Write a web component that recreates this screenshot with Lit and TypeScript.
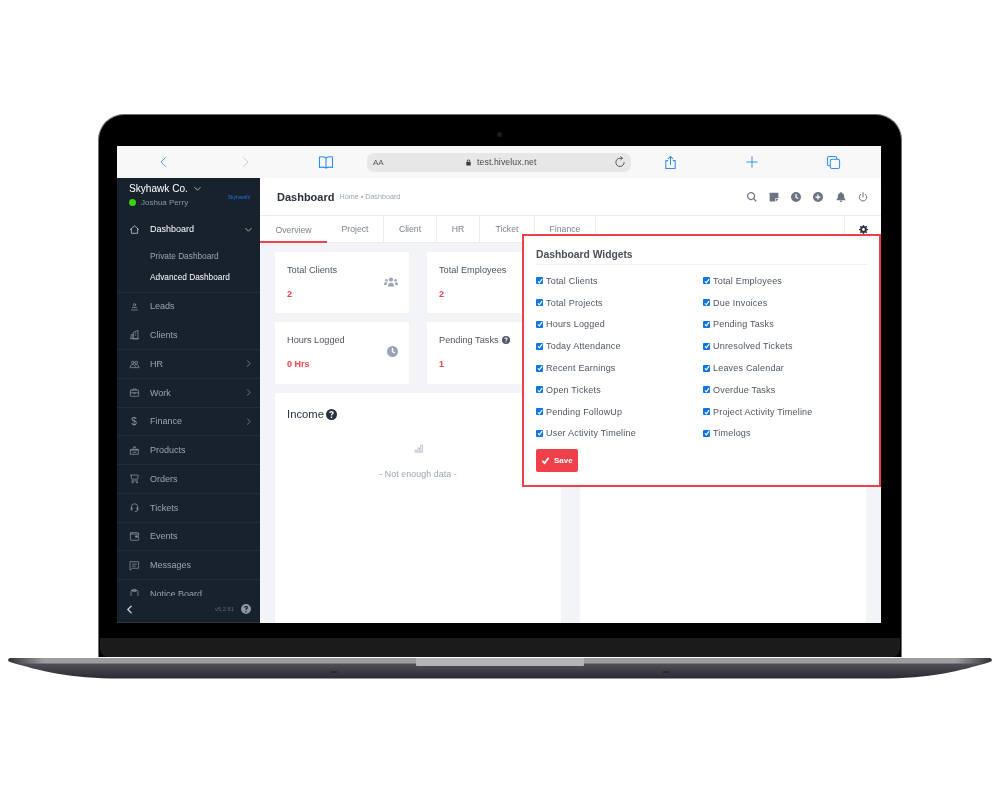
import { LitElement, html, css, svg } from "lit";
import { customElement } from "lit/decorators.js";

const stroke = (d: unknown, size = 11, vb = 16) => html`<svg class="ic" width=${size} height=${size} viewBox="0 0 ${vb} ${vb}" fill="none" stroke="currentColor" stroke-width="1.1" stroke-linecap="round" stroke-linejoin="round">${d}</svg>`;
const solid = (d: unknown, size = 11, vb = 16) => html`<svg class="ic" width=${size} height=${size} viewBox="0 0 ${vb} ${vb}" fill="currentColor">${d}</svg>`;

const helpIcon = (size: number) => solid(svg`<path fill-rule="evenodd" d="M8 0a8 8 0 1 0 0 16A8 8 0 0 0 8 0ZM7 11h2v2H7v-2Zm1-8c1.900 0 3.200 1.100 3.200 2.700 0 1.200-.7 1.800-1.400 2.300-.6.400-.8.600-.8 1.200v.3H7v-.5c0-1.100.5-1.600 1.100-2.100.6-.4 1-.7 1-1.200 0-.6-.5-1-1.200-1-.8 0-1.300.5-1.400 1.200L4.600 5.700C4.800 4 6.100 3 8 3Z"/>`, size);

const navIcons: Record<string, unknown> = {
  Dashboard: svg`<path d="M2 8 8 2.500 14 8M3.500 7v6.500h9V7"/>`,
  Leads: svg`<circle cx="8" cy="5.500" r="1.700"/><path d="M5 9.500h6M3.500 13h9"/>`,
  Clients: svg`<path d="M3 14V9l3-1.500V14M6 14V5l7-3v12zM2 14h12M9 6h1M9 9h1"/>`,
  HR: svg`<circle cx="5.500" cy="6.500" r="2"/><circle cx="10.500" cy="6.500" r="2"/><path d="M2 12.500c0-2 1.500-3 3.500-3s3.500 1 3.500 3M9.500 9.500c2.500 0 4.500 1 4.500 3M1.500 14h13"/>`,
  Work: svg`<rect x="2" y="4.500" width="12" height="9" rx="1"/><path d="M5.500 4.500V3h5v1.500M2 8.500h12M7 8.500v1h2v-1"/>`,
  Products: svg`<path d="M2.500 7h11v6.500h-11zM2 7h12M5 7l2-4M11 7 9 3M7 3h2M6 10.500h4"/>`,
  Orders: svg`<path d="M2.500 3h11l-1 6H4L3 3M4 11.500h8.500"/><circle cx="5" cy="13.500" r=".8"/><circle cx="11.500" cy="13.500" r=".8"/>`,
  Tickets: svg`<path d="M3.500 10V7a4.500 4.500 0 0 1 9 0v3"/><rect x="3" y="8" width="1.500" height="4" rx=".7"/><rect x="11.500" y="8" width="1.500" height="4" rx=".7"/><path d="M12.500 12c0 1.500-1.500 2-3.500 2"/>`,
  Events: svg`<rect x="2" y="2.500" width="12" height="11" rx="1"/><path d="M2 4.500h12"/><rect x="10" y="7" width="2" height="2" fill="currentColor"/>`,
  Messages: svg`<path d="M2 2.500h12v9.500H5l-3 2.500zM5 6h6M5 9h4"/>`,
  "Notice Board": svg`<rect x="3" y="3.500" width="10" height="11" rx="1"/><rect x="6" y="2" width="4" height="3"/>`,
};

const nav: { label: string; chevron?: boolean; top?: boolean }[] = [
  { label: "Leads", top: true },
  { label: "Clients" },
  { label: "HR", chevron: true, top: true },
  { label: "Work", chevron: true, top: true },
  { label: "Finance", chevron: true, top: true },
  { label: "Products", top: true },
  { label: "Orders", top: true },
  { label: "Tickets", top: true },
  { label: "Events", top: true },
  { label: "Messages", top: true },
  { label: "Notice Board", top: true },
];

const widgets = [
  ["Total Clients", "Total Employees"],
  ["Total Projects", "Due Invoices"],
  ["Hours Logged", "Pending Tasks"],
  ["Today Attendance", "Unresolved Tickets"],
  ["Recent Earnings", "Leaves Calendar"],
  ["Open Tickets", "Overdue Tasks"],
  ["Pending FollowUp", "Project Activity Timeline"],
  ["User Activity Timeline", "Timelogs"],
].flat();

const tabs: [string, number][] = [["Overview", 67], ["Project", 57], ["Client", 53], ["HR", 43], ["Ticket", 55], ["Finance", 61]];

const usersIcon = solid(svg`<circle cx="10" cy="5" r="3"/><circle cx="3.500" cy="6" r="1.800"/><circle cx="16.500" cy="6" r="1.800"/><path d="M5.500 15c0-3 1.500-5.500 4.500-5.500s4.500 2.500 4.500 5.500zM0 12c0-2 1-3 3-3 1 0 1.500.3 2 .8-.8 1-1.200 2-1.300 3.200H0zM20 12c0-2-1-3-3-3-1 0-1.500.3-2 .8.800 1 1.200 2 1.300 3.200H20z"/>`, 14, 20);
const clockIcon = (s: number) => solid(svg`<path fill-rule="evenodd" d="M8 0a8 8 0 1 0 0 16A8 8 0 0 0 8 0Zm-1 3h2v4.600l3 1.800-1 1.600L7 8.700z"/>`, s);

const cards = [
  { title: "Total Clients", value: "2", icon: usersIcon },
  { title: "Total Employees", value: "2", icon: null },
  { title: "Hours Logged", value: "0 Hrs", icon: clockIcon(11) },
  { title: "Pending Tasks", value: "1", icon: null, help: true },
];

@customElement("app-root")
export class AppRoot extends LitElement {
  static styles = css`
    :host {
      display: block;
      width: 1000px;
      height: 788px;
      background: #fff;
      padding-top: 114px;
      box-sizing: border-box;
      font-family: "Liberation Sans", Arial, sans-serif;
      overflow: hidden;
      color: #28313c;
      position: relative;
    }
    .ic { display: block; flex: none; }
    .lid {
      width: 804px;
      height: 543px;
      margin-left: 98px;
      box-sizing: border-box;
      background: #000;
      border: 1px solid #6f7177;
      border-bottom: 0;
      border-radius: 26px 26px 0 0;
      padding: 31px 20px 0 18px;
      display: flex;
      flex-direction: column;
    }
    .camera {
      position: absolute;
      left: 497px;
      top: 132px;
      width: 5px;
      height: 5px;
      border-radius: 50%;
      background: #1d1d20;
    }
    .screen {
      height: 477px;
      flex: none;
      background: #fff;
      display: flex;
      flex-direction: column;
      overflow: hidden;
      position: relative;
      filter: blur(0.25px);
    }
    .chin { flex: 1; background: #1b1b1b; margin: 15px -19px 0 -17px; border-radius: 0 0 8px 8px; }
    .base { display: block; }
    .browser {
      height: 32px;
      flex: none;
      background: #f8f8f8;
      display: grid;
      grid-template-columns: 250px 264px 250px;
      color: #2f8cf5;
    }
    .tools { display: flex; align-items: center; height: 32px; }
    .tools.l { padding-left: 41px; gap: 69px; }
    .tools.r { padding-left: 32px; gap: 67px; }
    .book { margin-left: -2px; }
    .fwd { color: #c4c4c4; }
    .url {
      align-self: center;
      height: 19px;
      background: #e7e7e7;
      border-radius: 7px;
      display: flex;
      align-items: center;
      color: #3a3a3c;
      padding: 0 5px 0 6px;
      gap: 5px;
    }
    .aa { font-size: 8px; color: #555; width: 87px; }
    .host { flex: 1; color: #4a4a4d; font-size: 8.700px; letter-spacing: .1px; }
    .app { flex: 1; display: flex; min-height: 0; }
    .side {
      width: 143px;
      flex: none;
      background: #18222d;
      color: #9aa5b3;
      display: flex;
      flex-direction: column;
      font-size: 9px;
    }
    .brand { height: 38px; flex: none; padding: 4px 0 0 12px; box-sizing: border-box; position: relative; }
    .co { display: flex; align-items: center; gap: 5px; color: #fff; font-size: 10.100px; height: 13px; }
    .user { display: flex; align-items: center; gap: 5px; color: #8b96a5; font-size: 8px; margin-top: 3px; }
    .dot { width: 7px; height: 7px; border-radius: 50%; background: #39d411; }
    .logo { position: absolute; left: 111px; top: 17px; font-size: 4.500px; font-weight: 700; color: #1d5fb8; }
    .nav { flex: 1; overflow: hidden; min-height: 0; }
    .item {
      height: 28.750px;
      box-sizing: border-box;
      display: flex;
      align-items: center;
      padding: 0 7.500px 0 11.500px;
      gap: 10.500px;
    }
    .item.top { border-top: 1px solid #222d39; }
    .item .ic:first-child { color: #8a94a3; }
    .item .lbl { flex: 1; }
    .item.active { color: #fff; height: 26px; }
    .item.active .ic:first-child { color: #c9d1dc; }
    .sub { height: 21px; display: flex; align-items: center; padding-left: 33px; font-size: 8.300px; }
    .sub.on { color: #fff; }
    .subs { padding: 3px 0 4.600px; }
    .dollar { width: 11px; text-align: center; font-size: 10px; color: #8a94a3; }
    .foot {
      height: 27px;
      flex: none;
      background: #18222d;
      display: flex;
      align-items: center;
      padding: 0 9px 0 8px;
      font-size: 5.800px;
      color: #5d6878;
      gap: 5px;
      border-bottom: 1px solid #2b3542;
      box-sizing: border-box;
    }
    .back { color: #c9d1dc; }
    .foot .v { flex: 1; text-align: right; }
    .foot-help { color: #8d96a3; margin-left: 2px; }
    .main { flex: 1; display: flex; flex-direction: column; min-width: 0; background: #f2f4f7; }
    .head {
      height: 38px;
      flex: none;
      background: #fff;
      display: flex;
      align-items: center;
      padding: 0 13px 0 17px;
      border-bottom: 1px solid #ebedf0;
      box-sizing: border-box;
    }
    .head h1 { margin: 0; font-size: 11px; font-weight: 700; color: #28313c; }
    .crumb { font-size: 7.200px; color: #99a5b5; margin-left: 5px; flex: 1; }
    .hicons { display: flex; gap: 12.300px; color: #6a7482; align-items: center; }
    .tabs { height: 27px; flex: none; background: #fff; display: flex; border-bottom: 1px solid #ebedf0; box-sizing: border-box; position: relative; }
    .tab {
      display: flex;
      align-items: center;
      justify-content: center;
      font-size: 8.700px;
      color: #7a8390;
      border-right: 1px solid #ebedf0;
      box-sizing: border-box;
      height: 26px;
    }
    .tab.on { border-right: 0; box-shadow: inset 0 -2px 0 #f5414b; height: 27px; }
    .gear {
      position: absolute;
      right: 0;
      top: 0;
      width: 37px;
      height: 26px;
      box-sizing: border-box;
      border-left: 1px solid #ebedf0;
      color: #28313c;
      display: flex;
      align-items: center;
      justify-content: center;
    }
    .body {
      flex: 1;
      display: grid;
      grid-template-columns: 286px 1fr;
      grid-template-rows: auto 1fr;
      gap: 9px 19px;
      padding: 9px 15px 0 15px;
      min-height: 0;
    }
    .cards { display: grid; grid-template-columns: 134px 134px; grid-template-rows: 61px 62px; gap: 9px 18px; grid-column: 1 / 3; }
    .card {
      background: #fff;
      border-radius: 2px;
      padding: 12px;
      box-sizing: border-box;
      position: relative;
      font-size: 9.200px;
      color: #4d5663;
    }
    .card .ct { display: flex; align-items: center; gap: 3px; height: 12px; color: #4d5663; }
    .card .val { color: #f5414b; font-weight: 700; font-size: 9px; margin-top: 13px; }
    .card .ci { position: absolute; right: 11px; top: 24px; color: #99a5b5; }
    .wide { padding: 15px 12px; }
    .wide h2 { margin: 0; display: flex; gap: 2px; align-items: center; font-size: 11.300px; font-weight: 400; color: #28313c; }
    .nodata { margin-top: 24px; display: flex; flex-direction: column; align-items: center; gap: 16px; color: #99a5b5; font-size: 8.800px; letter-spacing: .1px; }
    .panel {
      position: absolute;
      left: 405px;
      top: 88px;
      width: 359px;
      height: 253px;
      box-sizing: border-box;
      background: #fff;
      border: 2px solid #ef3f49;
      padding: 11px 11px 0 12px;
    }
    .panel h3 { margin: 0; height: 17px; line-height: 16px; font-size: 10.300px; font-weight: 700; color: #4a4f57; border-bottom: 1px solid #eff0f2; }
    .grid { display: grid; grid-template-columns: 167px 1fr; grid-auto-rows: 21.800px; margin-top: 5px; }
    .w { display: flex; align-items: center; gap: 3px; font-size: 9px; color: #4d5663; letter-spacing: .2px; }
    .cb { width: 7px; height: 7px; background: #0d75e6; border-radius: 1px; color: #fff; display: flex; align-items: center; justify-content: center; }
    .save {
      margin-top: 5px;
      width: 42px;
      height: 23px;
      background: #f0414a;
      border: 0;
      border-radius: 2px;
      color: #fff;
      font: 700 8px "Liberation Sans", Arial, sans-serif;
      display: flex;
      align-items: center;
      gap: 4px;
      padding: 0 0 0 5px;
    }
  `;

  render() {
    const tick = (s: number) => html`<svg width=${s} height=${s} viewBox="0 0 10 10" fill="none" stroke="currentColor" stroke-width="2"><path d="M1.500 5.500 4 8l4.500-6"/></svg>`;
    return html`
      <div class="camera"></div>
      <div class="lid">
        <div class="screen">
          <div class="browser">
            <div class="tools l">
              ${stroke(svg`<path d="M10 2 4 8l6 6"/>`, 12)}
              <span class="fwd">${stroke(svg`<path d="m6 2 6 6-6 6"/>`, 12)}</span>
              <span class="book">${stroke(svg`<path d="M8 4C6 2.500 3.500 2.500 1.500 3v10.500c2-.5 4.500-.5 6.500.5 2-1 4.500-1 6.500-.5V3C12.500 2.500 10 2.500 8 4Zm0 0v10"/>`, 16)}</span>
            </div>
            <div class="url">
              <span class="aa">AA</span>
              ${solid(svg`<path fill-rule="evenodd" d="M4 7V5a4 4 0 0 1 8 0v2h1v8H3V7zm2 0h4V5a2 2 0 0 0-4 0z"/>`, 7)}
              <span class="host">test.hivelux.net</span>
              ${stroke(svg`<path d="M13.500 8.500A5.500 5.500 0 1 1 8 3h3M9 1l2 2-2 2"/>`, 12)}
            </div>
            <div class="tools r">
              ${stroke(svg`<path d="M5 6H3v8.500h10V6h-2M8 10V1.500M5.500 4 8 1.500 10.500 4"/>`, 15)}
              ${stroke(svg`<path d="M8 2v12M2 8h12"/>`, 14)}
              ${stroke(svg`<rect x="1.500" y="1.500" width="10" height="10" rx="2"/><rect x="4.500" y="4.500" width="10" height="10" rx="2" fill="#f8f8f8"/>`, 15)}
            </div>
          </div>
          <div class="app">
            <aside class="side">
              <div class="brand">
                <div class="co">Skyhawk Co. ${stroke(svg`<path d="m3 6 5 5 5-5"/>`, 9)}</div>
                <div class="user"><span class="dot"></span>Joshua Perry</div>
                <div class="logo">SkyhawkV</div>
              </div>
              <div class="nav">
                <div class="item active">
                  ${stroke(navIcons.Dashboard)}
                  <span class="lbl">Dashboard</span>
                  ${stroke(svg`<path d="m3 6 5 5 5-5"/>`, 9)}
                </div>
                <div class="subs">
                  <div class="sub">Private Dashboard</div>
                  <div class="sub on">Advanced Dashboard</div>
                </div>
                ${nav.map(
                  (n) => html`<div class="item ${n.top ? "top" : ""}">
                    ${n.label === "Finance"
                      ? html`<span class="dollar">$</span>`
                      : stroke(navIcons[n.label])}
                    <span class="lbl">${n.label}</span>
                    ${n.chevron ? stroke(svg`<path d="m6 3 5 5-5 5"/>`, 9) : ""}
                  </div>`
                )}
              </div>
              <div class="foot">
                <span class="back">${stroke(svg`<path stroke-width="2.500" d="M11 2 5 8l6 6"/>`, 9)}</span>
                <span class="v">v5.2.81</span>
                <span class="foot-help">${helpIcon(10)}</span>
              </div>
            </aside>
            <div class="main">
              <div class="head">
                <h1>Dashboard</h1>
                <span class="crumb">Home • Dashboard</span>
                <div class="hicons">
                  ${solid(svg`<path fill-rule="evenodd" d="M6.500 0a6.500 6.500 0 1 0 3.900 11.700l3.700 3.700 1.400-1.400-3.700-3.700A6.500 6.500 0 0 0 6.500 0Zm0 2a4.500 4.500 0 1 1 0 9 4.500 4.500 0 0 1 0-9Z"/>`, 10)}
                  ${solid(svg`<path d="M1 1h14v9h-5v5H1zM11 11h4l-4 4z"/>`, 10)}
                  ${clockIcon(10)}
                  ${solid(svg`<path fill-rule="evenodd" d="M8 0a8 8 0 1 0 0 16A8 8 0 0 0 8 0ZM7 4h2v3h3v2H9v3H7V9H4V7h3z"/>`, 10)}
                  ${solid(svg`<path d="M8 0a1.500 1.500 0 0 1 1.300 1.500C11.500 2 13 4 13 6.500c0 3 1 4.500 2 5.500v1H1v-1c1-1 2-2.500 2-5.500C3 4 4.500 2 6.700 1.500A1.500 1.500 0 0 1 8 0ZM6 14h4a2 2 0 0 1-4 0Z"/>`, 10)}
                  ${stroke(svg`<path stroke-width="1.600" d="M8 1v7M4.500 3.500a6 6 0 1 0 7 0"/>`, 10)}
                </div>
              </div>
              <div class="tabs">
                ${tabs.map(([t, w], i) => html`<div class="tab ${i === 0 ? "on" : ""}" style="width:${w}px">${t}</div>`)}
                <span class="gear">${solid(svg`<path fill-rule="evenodd" d="M7 0h2l.4 2.200 1.500.6L12.700 1.500l1.800 1.800-1.300 1.800.6 1.500L16 7v2l-2.200.4-.6 1.500 1.300 1.800-1.800 1.800-1.800-1.300-1.500.6L9 16H7l-.4-2.200-1.500-.6-1.800 1.300-1.800-1.800 1.300-1.800-.6-1.500L0 9V7l2.200-.4.6-1.500-1.300-1.800 1.800-1.800 1.800 1.300 1.500-.6zM8 5.500a2.500 2.500 0 1 0 0 5 2.500 2.500 0 0 0 0-5Z"/>`, 9)}</span>
              </div>
              <div class="body">
                <div class="cards">
                  ${cards.map(
                    (c) => html`<div class="card">
                      <div class="ct">${c.title}${c.help ? helpIcon(8) : ""}</div>
                      <div class="val">${c.value}</div>
                      ${c.icon ? html`<span class="ci">${c.icon}</span>` : ""}
                    </div>`
                  )}
                </div>
                <div class="card wide">
                  <h2>Income ${helpIcon(11)}</h2>
                  <div class="nodata">
                    <span>${stroke(svg`<path d="M2 14v-3h3v3zM7 14V7h3v7zM12 14V2h3v12z"/>`, 9)}</span>
                    <span>- Not enough data -</span>
                  </div>
                </div>
                <div class="card"></div>
              </div>
            </div>
          </div>
          <div class="panel">
            <h3>Dashboard Widgets</h3>
            <div class="grid">
              ${widgets.map((w) => html`<div class="w"><span class="cb">${tick(6)}</span>${w}</div>`)}
            </div>
            <button class="save">${tick(9)} Save</button>
          </div>
        </div>
        <div class="chin"></div>
      </div>
      <svg class="base" width="1000" height="24" viewBox="0 0 1000 24">
        <defs>
          <linearGradient id="b" x1="0" y1="0" x2="0" y2="1">
            <stop offset="0" stop-color="#5e5e66"/><stop offset="1" stop-color="#2a2a33"/>
          </linearGradient>
          <linearGradient id="s" x1="0" y1="0" x2="1" y2="0">
            <stop offset="0" stop-color="#2f2f35"/><stop offset=".035" stop-color="#9c9ca0"/>
            <stop offset=".965" stop-color="#9c9ca0"/><stop offset="1" stop-color="#2f2f35"/>
          </linearGradient>
        </defs>
        <path d="M12 1H988C993 1 993 4 990 5C960 14 930 21.500 880 21.500H120C70 21.500 40 14 10 5C7 4 7 1 12 1Z" fill="url(#b)"/>
        <path d="M12 1H988C992 1 992 3 990 4.500L984 6.500H16L10 4.500C8 3 8 1 12 1Z" fill="url(#s)"/>
        <rect x="416" y="1" width="168" height="8" rx="1" fill="#b4b4b8"/>
        <ellipse cx="334" cy="15" rx="4" ry=".8" fill="#222228"/>
        <ellipse cx="666" cy="15" rx="4" ry=".8" fill="#222228"/>
      </svg>
    `;
  }
}
